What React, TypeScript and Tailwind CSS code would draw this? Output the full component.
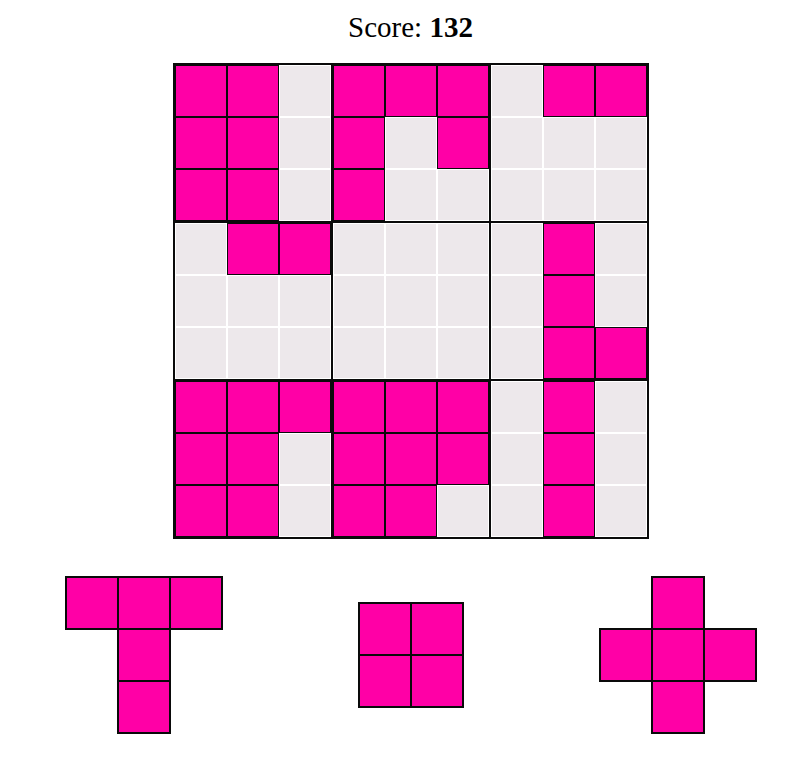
import React from "react";

const board = [
  "PPEPPPEPP",
  "PPEPEPEEE",
  "PPEPEEEEE",
  "EPPEEEEPE",
  "EEEEEEEPE",
  "EEEEEEEPP",
  "PPPPPPEPE",
  "PPEPPPEPE",
  "PPEPPEEPE",
];

const pieces = [
  ["XXX", ".X.", ".X."],
  ["XX", "XX"],
  [".X.", "XXX", ".X."],
];

function Cell({ filled }: { filled: boolean }) {
  return filled ? (
    <div className="w-[52px] h-[52px] bg-[#ff00a6] border border-[#0a0a0a]" />
  ) : (
    <div className="w-[52px] h-[52px] bg-[#ede8eb] border border-white" />
  );
}

function Box({ br, bc }: { br: number; bc: number }) {
  const cells = [];
  for (let r = 0; r < 3; r++) {
    for (let c = 0; c < 3; c++) {
      cells.push(<Cell key={r * 3 + c} filled={board[br * 3 + r][bc * 3 + c] === "P"} />);
    }
  }
  return <div className="grid grid-cols-3 border border-[#0a0a0a]">{cells}</div>;
}

function Piece({ shape }: { shape: string[] }) {
  const cols = shape[0].length;
  return (
    <div className={cols === 3 ? "grid grid-cols-3" : "grid grid-cols-2"}>
      {shape.join("").split("").map((ch, i) =>
        ch === "X" ? (
          <div key={i} className="w-[54px] h-[54px] -m-px bg-[#ff00a6] border-2 border-[#0a0a0a]" />
        ) : (
          <div key={i} className="w-[54px] h-[54px] -m-px" />
        )
      )}
    </div>
  );
}

export default function App() {
  return (
    <div className="w-full overflow-hidden bg-white min-h-[782px]" style={{ fontFamily: '"Liberation Serif", serif' }}>
      <div className="w-[801px] ml-[10px] flex flex-col items-center">
        <div className="mt-[9px] text-[29px] leading-[36px] text-black">
          Score: <span className="font-bold">132</span>
        </div>

        {/* Board */}
        <div className="mt-[18px] grid grid-cols-3 border border-[#0a0a0a]">
          {[0, 1, 2].map((br) =>
            [0, 1, 2].map((bc) => <Box key={br * 3 + bc} br={br} bc={bc} />)
          )}
        </div>

        {/* Pieces */}
        <div className="mt-[38px] w-full grid grid-cols-3 items-center">
          {pieces.map((p, i) => (
            <div key={i} className="flex justify-center">
              <Piece shape={p} />
            </div>
          ))}
        </div>
      </div>
    </div>
  );
}
